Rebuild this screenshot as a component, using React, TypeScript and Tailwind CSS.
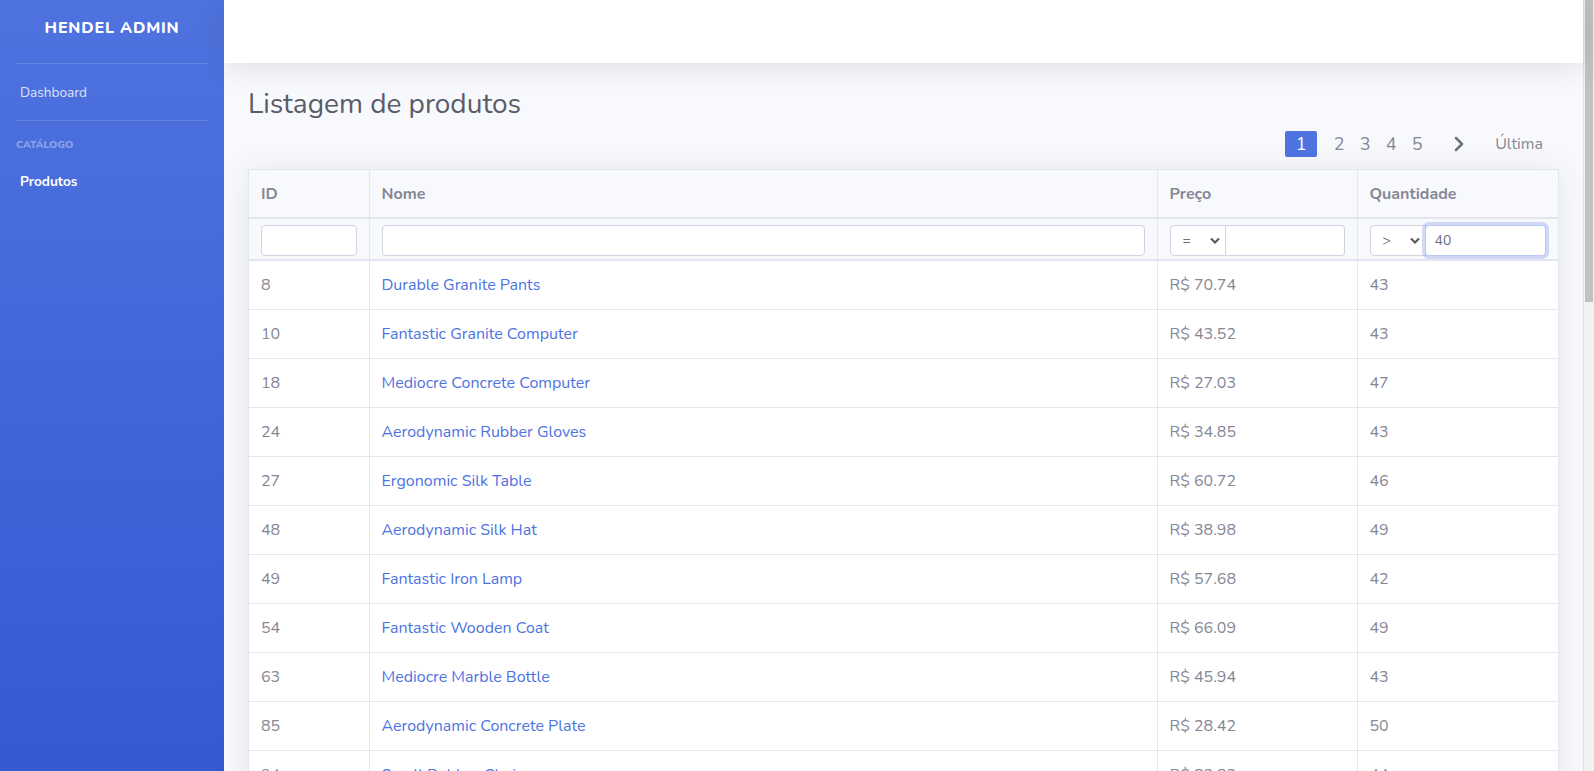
import { ChevronRight } from "lucide-react";

interface Produto {
  id: number;
  nome: string;
  preco: string;
  quantidade: number;
}

const produtos: Produto[] = [
  { id: 8, nome: "Durable Granite Pants", preco: "70.74", quantidade: 43 },
  { id: 10, nome: "Fantastic Granite Computer", preco: "43.52", quantidade: 43 },
  { id: 18, nome: "Mediocre Concrete Computer", preco: "27.03", quantidade: 47 },
  { id: 24, nome: "Aerodynamic Rubber Gloves", preco: "34.85", quantidade: 43 },
  { id: 27, nome: "Ergonomic Silk Table", preco: "60.72", quantidade: 46 },
  { id: 48, nome: "Aerodynamic Silk Hat", preco: "38.98", quantidade: 49 },
  { id: 49, nome: "Fantastic Iron Lamp", preco: "57.68", quantidade: 42 },
  { id: 54, nome: "Fantastic Wooden Coat", preco: "66.09", quantidade: 49 },
  { id: 63, nome: "Mediocre Marble Bottle", preco: "45.94", quantidade: 43 },
  { id: 85, nome: "Aerodynamic Concrete Plate", preco: "28.42", quantidade: 50 },
  { id: 94, nome: "Small Rubber Chair", preco: "83.83", quantidade: 44 },
];

function SelectBox({ value }: { value: string }) {
  return (
    <div className="flex items-center justify-between w-[56px] h-[31px] pl-3 pr-[5px] bg-white border border-[#d1d3e2] rounded-l-[4px] text-[#6e707e] text-sm">
      <span>{value}</span>
      <svg width="10" height="7" viewBox="0 0 10 7" fill="none">
        <path d="M1 1.5 5 5.5 9 1.5" stroke="#555" strokeWidth="2" />
      </svg>
    </div>
  );
}

function Sidebar() {
  return (
    <aside className="w-[224px] shrink-0 h-full bg-gradient-to-b from-[#4e73df] to-[#3659d2] text-white">
      <div className="h-[55px] flex items-center justify-center font-extrabold text-base tracking-[0.05rem]">
        HENDEL ADMIN
      </div>
      <hr className="mt-[8px] mx-4 border-t border-white/15" />
      <div className="h-[56px] pt-[2px] flex items-center px-5 text-[13.6px] text-white/80">Dashboard</div>
      <hr className="mx-4 border-t border-white/15" />
      <div className="mt-[17px] px-4 text-[10.4px] leading-[13px] font-extrabold text-white/40">CATÁLOGO</div>
      <div className="mt-[3px] h-[56px] flex items-center px-5 text-[13.6px] font-bold">Produtos</div>
    </aside>
  );
}

export default function App() {
  return (
    <div
      className="flex h-screen w-full overflow-hidden text-[#858796]"
      style={{ fontFamily: "Nunito, Lato, 'Open Sans', sans-serif" }}
    >
      <Sidebar />
      <div className="flex-1 min-w-0 flex flex-col bg-[#f8f9fc]">
        <header className="h-[63px] shrink-0 bg-white shadow-[0_0.15rem_1.75rem_0_rgba(58,59,69,0.15)] relative z-10" />
        <main className="px-6 min-h-0">
          <h1 className="mt-[24px] text-[28px] leading-[34px] text-[#5a5c69]">Listagem de produtos</h1>
          <div className="mt-[10px] h-[26px] flex items-center justify-end pr-4 text-lg">
            <span className="w-[32px] h-[26px] flex items-center justify-center rounded-[2px] bg-[#4e73df] text-white">1</span>
            <div className="ml-[9px] flex">
              {[2, 3, 4, 5].map((n) => (
                <span key={n} className="w-[26px] text-center">{n}</span>
              ))}
            </div>
            <ChevronRight className="ml-[17px] w-[24px] h-[26px] text-[#6e707e]" strokeWidth={2.5} />
            <span className="ml-[24px] text-base">Última</span>
          </div>
          <div className="mt-[12px] bg-white border border-[#e3e6f0] shadow-[0_0.15rem_1.75rem_0_rgba(58,59,69,0.1)]">
            <table className="w-full table-fixed border-collapse text-base">
              <colgroup>
                <col className="w-[120px]" />
                <col />
                <col className="w-[200px]" />
                <col className="w-[201px]" />
              </colgroup>
              <thead>
                <tr className="bg-[#f8f9fc] h-[48px] border-b-2 border-[#e3e6f0]">
                  {["ID", "Nome", "Preço", "Quantidade"].map((h, i) => (
                    <th
                      key={h}
                      className={`px-3 text-left font-bold ${i < 3 ? "border-r border-[#e3e6f0]" : ""}`}
                    >
                      {h}
                    </th>
                  ))}
                </tr>
                <tr className="bg-[#f8f9fc] h-[42px] border-b-2 border-[#e3e6f0]">
                  <td className="px-3 pt-[6px] pb-[3px] border-r border-[#e3e6f0]">
                    <div className="h-[31px] bg-white border border-[#d1d3e2] rounded-[4px]" />
                  </td>
                  <td className="px-3 pt-[6px] pb-[3px] border-r border-[#e3e6f0]">
                    <div className="h-[31px] bg-white border border-[#d1d3e2] rounded-[4px]" />
                  </td>
                  <td className="px-3 pt-[6px] pb-[3px] border-r border-[#e3e6f0]">
                    <div className="flex">
                      <SelectBox value="=" />
                      <div className="flex-1 h-[31px] bg-white border border-l-0 border-[#d1d3e2] rounded-r-[4px]" />
                    </div>
                  </td>
                  <td className="px-3 pt-[6px] pb-[3px]">
                    <div className="flex">
                      <SelectBox value=">" />
                      <div className="flex-1 h-[31px] flex items-center px-[9px] bg-white border border-[#bac8f3] rounded-[4px] -ml-px shadow-[0_0_0_3px_rgba(78,115,223,0.25)] text-sm text-[#6e707e]">
                        40
                      </div>
                    </div>
                  </td>
                </tr>
              </thead>
              <tbody>
                {produtos.map((p) => (
                  <tr key={p.id} className="h-[49px] border-b border-[#e3e6f0]">
                    <td className="px-3 border-r border-[#e3e6f0]">{p.id}</td>
                    <td className="px-3 border-r border-[#e3e6f0] text-[#4e73df]">{p.nome}</td>
                    <td className="px-3 border-r border-[#e3e6f0]">R$ {p.preco}</td>
                    <td className="px-3">{p.quantidade}</td>
                  </tr>
                ))}
              </tbody>
            </table>
          </div>
        </main>
      </div>
      <div className="w-[11px] shrink-0 h-full bg-[#f1f1f1] border-l border-[#e0e0e0] flex flex-col">
        <div className="h-[302px] mx-px bg-[#c1c1c1]" />
      </div>
    </div>
  );
}
